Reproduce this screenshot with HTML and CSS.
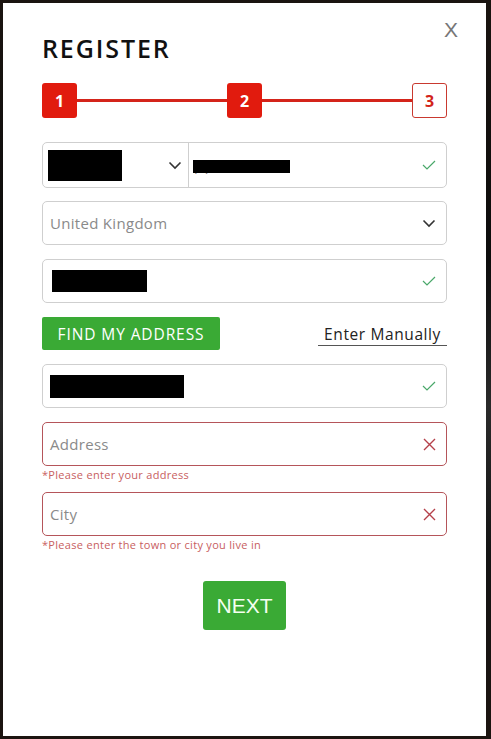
FILE: index.html
```html
<!DOCTYPE html>
<html lang="en">
<head>
<meta charset="utf-8">
<title>Register</title>
<link rel="stylesheet" href="styles.css">
</head>
<body>
<div class="modal">
  <button class="close" type="button">X</button>
  <h1 class="title">REGISTER</h1>

  <div class="steps">
    <div class="step done">1</div>
    <div class="step-line"></div>
    <div class="step done">2</div>
    <div class="step-line"></div>
    <div class="step current">3</div>
  </div>

  <form class="form">
    <div class="field phone">
      <div class="phone-code">
        <span class="redact redact-code"></span>
        <svg class="chev" width="14" height="9" viewBox="0 0 14 9"><path d="M1.5 1.5 L7 7 L12.5 1.5" fill="none" stroke="#333" stroke-width="1.6"/></svg>
      </div>
      <div class="phone-num">
        <span class="phone-text">(0) 0000000<span class="redact redact-num"></span></span>
        <svg class="ok" width="14" height="10" viewBox="0 0 14 10"><path d="M1 5 L5 9 L13 1" fill="none" stroke="#4aa86a" stroke-width="1.2"/></svg>
      </div>
    </div>

    <div class="field">
      <span class="placeholder">United Kingdom</span>
      <svg class="chev" width="14" height="9" viewBox="0 0 14 9"><path d="M1.5 1.5 L7 7 L12.5 1.5" fill="none" stroke="#333" stroke-width="1.6"/></svg>
    </div>

    <div class="field">
      <span class="redact redact-post"></span>
      <svg class="ok" width="14" height="10" viewBox="0 0 14 10"><path d="M1 5 L5 9 L13 1" fill="none" stroke="#4aa86a" stroke-width="1.2"/></svg>
    </div>

    <div class="find-row">
      <button class="btn-find" type="button">FIND MY ADDRESS</button>
      <a class="manual" href="#">Enter Manually</a>
    </div>

    <div class="field">
      <span class="redact redact-line"></span>
      <svg class="ok" width="14" height="10" viewBox="0 0 14 10"><path d="M1 5 L5 9 L13 1" fill="none" stroke="#4aa86a" stroke-width="1.2"/></svg>
    </div>

    <div class="group">
      <div class="field error">
        <span class="placeholder">Address</span>
        <svg class="bad" width="13" height="13" viewBox="0 0 13 13"><path d="M1 1 L12 12 M12 1 L1 12" fill="none" stroke="#b5404a" stroke-width="1.4"/></svg>
      </div>
      <div class="err-msg">*Please enter your address</div>
    </div>

    <div class="group">
      <div class="field error">
        <span class="placeholder">City</span>
        <svg class="bad" width="13" height="13" viewBox="0 0 13 13"><path d="M1 1 L12 12 M12 1 L1 12" fill="none" stroke="#b5404a" stroke-width="1.4"/></svg>
      </div>
      <div class="err-msg">*Please enter the town or city you live in</div>
    </div>

    <div class="next-row">
      <button class="btn-next" type="button">NEXT</button>
    </div>
  </form>
</div>
</body>
</html>
```

FILE: styles.css
```css
* { box-sizing: border-box; }

html, body {
  margin: 0;
  padding: 0;
}

body {
  width: 491px;
  height: 739px;
  background: linear-gradient(180deg, #1a1410 0%, #0c0c0c 35%, #2a2a2a 55%, #141414 75%, #1c1410 100%);
  font-family: "Open Sans", "Liberation Sans", sans-serif;
  padding: 3px 5px 3px 3px;
  overflow: hidden;
}

.modal {
  position: relative;
  width: 483px;
  height: 733px;
  background: #fff;
  padding: 30px 39px 0 39px;
}

.close {
  position: absolute;
  top: 15px;
  right: 28px;
  border: 0;
  background: none;
  padding: 0;
  font-family: "Liberation Sans", sans-serif;
  font-size: 21px;
  font-weight: 300;
  color: #777;
  line-height: 24px;
}

.title {
  margin: 0;
  font-family: "Open Sans", sans-serif;
  font-weight: 600;
  font-size: 25px;
  line-height: 30px;
  letter-spacing: 1.9px;
  color: #111;
}

.steps {
  display: flex;
  align-items: center;
  margin-top: 20px;
}

.step {
  width: 35px;
  height: 35px;
  flex: none;
  border-radius: 3px;
  display: flex;
  align-items: center;
  justify-content: center;
  font-family: "Open Sans", sans-serif;
  font-weight: 700;
  font-size: 16px;
}

.step.done {
  background: #e11b0e;
  color: #fff;
}

.step.current {
  background: #fff;
  border: 1px solid #c9392f;
  color: #d2241a;
}

.step-line {
  flex: 1;
  height: 3px;
  background: #d4241a;
}

.form {
  display: flex;
  flex-direction: column;
  margin-top: 24px;
}

.field {
  height: 44px;
  border: 1px solid #cfcfcf;
  border-radius: 5px;
  display: flex;
  align-items: center;
  justify-content: space-between;
  padding: 0 10px 0 7px;
  margin-bottom: 14px;
}

.field.phone {
  height: 46px;
  padding: 0;
  margin-bottom: 13px;
}

.phone-code {
  width: 146px;
  height: 100%;
  border-right: 1px solid #cfcfcf;
  display: flex;
  align-items: center;
  justify-content: space-between;
  padding: 0 6px 0 5px;
}

.phone-num {
  flex: 1;
  display: flex;
  align-items: center;
  justify-content: space-between;
  padding: 0 10px 0 4px;
}

.phone-text {
  position: relative;
  font-size: 14px;
  color: #777;
}

.redact {
  display: block;
  background: #000;
}

.redact-code { width: 74px; height: 31px; }
.redact-num {
  position: absolute;
  left: 0;
  top: 4px;
  width: 97px;
  height: 13px;
}
.redact-post { width: 95px; height: 22px; margin-left: 2px; }
.redact-line { width: 134px; height: 23px; }

.placeholder {
  font-size: 15px;
  letter-spacing: 0.3px;
  color: #8a8a8a;
}

.find-row {
  display: flex;
  align-items: center;
  justify-content: space-between;
  margin-bottom: 14px;
}

.btn-find {
  height: 33px;
  width: 178px;
  border: 0;
  border-radius: 2px;
  background: #3aaa35;
  color: #fff;
  font-family: "Open Sans", sans-serif;
  font-size: 15.5px;
  letter-spacing: 0.9px;
  font-weight: 400;
  padding: 0;
}

.manual {
  display: block;
  width: 129px;
  text-align: right;
  padding: 0 6px 1px 0;
  border-bottom: 1px solid #555;
  color: #222;
  text-decoration: none;
  font-size: 15.5px;
  letter-spacing: 0.6px;
  line-height: 20px;
  margin-top: 3px;
}

.field.error {
  border-color: #b5555a;
  margin-bottom: 0;
}

.group {
  margin-bottom: 11px;
}

.err-msg {
  font-size: 11px;
  letter-spacing: 0.3px;
  color: #c8605f;
  margin-top: 3px;
  padding-left: 0;
  line-height: 12px;
}

.next-row {
  display: flex;
  justify-content: center;
  margin-top: 19px;
}

.btn-next {
  width: 83px;
  height: 49px;
  border: 0;
  border-radius: 3px;
  background: #3aaa35;
  color: #f4fff0;
  font-family: "Liberation Sans", Arial, sans-serif;
  font-size: 21px;
  padding: 0;
}
```
